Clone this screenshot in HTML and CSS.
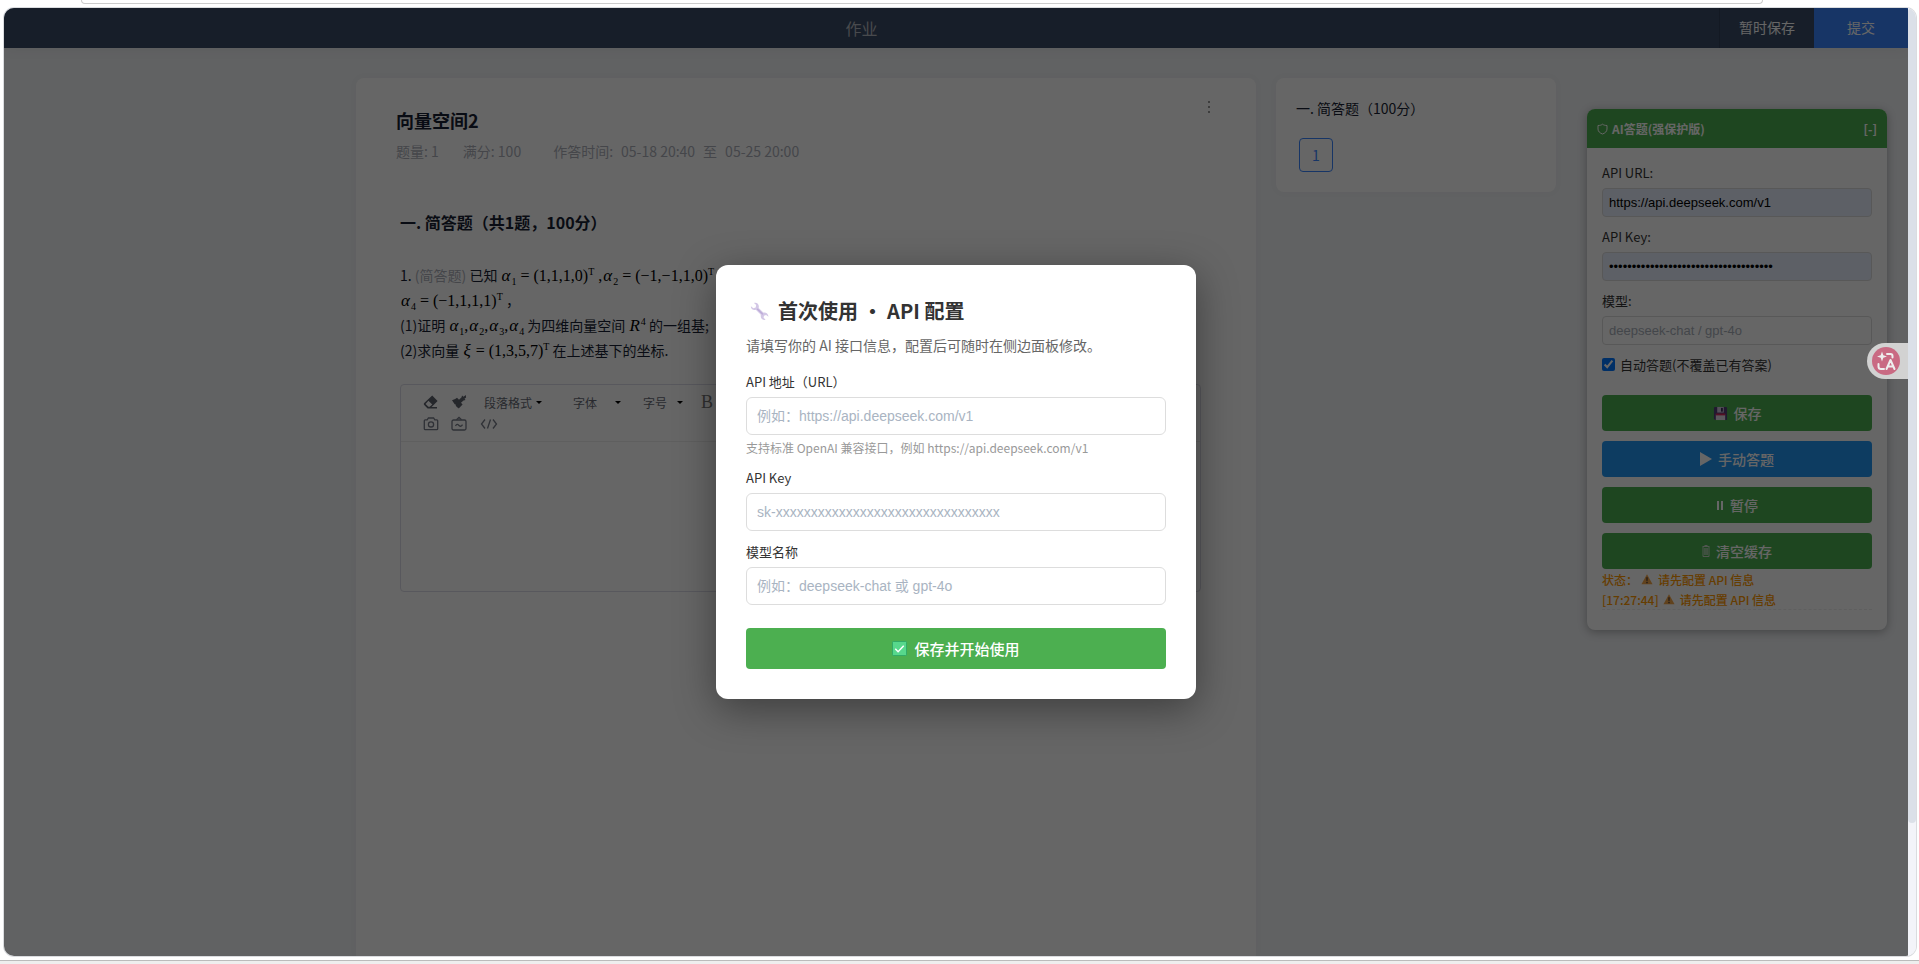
FILE: index.html
```
<!DOCTYPE html>
<html lang="zh-CN">
<head>
    <meta charset="UTF-8">
    <meta name="viewport" content="width=device-width, initial-scale=1.0">
    <title>作业</title>
    <link rel="stylesheet" href="styles.css">
</head>
<body>
    <div class="address-edge"></div>

    <div class="window">
        <div class="view">
            <header class="top-bar">
                <h1 class="top-title">作业</h1>
                <button class="top-btn" type="button">暂时保存</button>
                <button class="top-btn top-submit" type="button">提交</button>
            </header>

            <div class="page">
                <main class="paper">
                    <div class="paper-head">
                        <h2 class="paper-title">向量空间2</h2>
                        <svg class="more-icon" viewBox="0 0 4 14"><circle cx="2" cy="2" r="1"/><circle cx="2" cy="7" r="1"/><circle cx="2" cy="12" r="1"/></svg>
                    </div>
                    <div class="paper-meta">
                        <span>题量: 1</span>
                        <span>满分: 100</span>
                        <span class="meta-time">作答时间:<time>05-18 20:40</time>至<time>05-25 20:00</time></span>
                    </div>

                    <section class="question">
                        <h3 class="question-group">一. 简答题（共1题，100分）</h3>
                        <div class="question-text">
                            <p>1. <span class="question-type">(简答题)</span> 已知 <span class="math"><i>α</i><sub>1</sub> = (1,1,1,0)<sup>T</sup> ,<i>α</i><sub>2</sub> = (−1,−1,1,0)<sup>T</sup> ,<i>α</i><sub>3</sub> = (1,−1,1,−1)<sup>T</sup> ,</span></p>
                            <p><span class="math"><i>α</i><sub>4</sub> = (−1,1,1,1)<sup>T</sup></span> ，</p>
                            <p>(1)证明 <span class="math"><i>α</i><sub>1</sub>,<i>α</i><sub>2</sub>,<i>α</i><sub>3</sub>,<i>α</i><sub>4</sub></span> 为四维向量空间 <span class="math"><i>R</i><sup>4</sup></span> 的一组基;</p>
                            <p>(2)求向量 <span class="math"><i>ξ</i> = (1,3,5,7)<sup>T</sup></span> 在上述基下的坐标.</p>
                        </div>

                        <div class="editor">
                            <div class="toolbar">
                                <div class="toolbar-row">
                                    <button class="tool" type="button" aria-label="清除格式">
                                        <svg viewBox="0 0 16 16"><path d="M9.2 1.6 14.6 7 8.6 13H14v1.4H4.6L1.2 11a1.4 1.4 0 0 1 0-2zM5.4 6.8 2.6 9.9 5.4 12.8h1.3l2.6-2.4z" fill-rule="evenodd"/></svg>
                                    </button>
                                    <button class="tool" type="button" aria-label="格式刷">
                                        <svg viewBox="0 0 16 16"><path d="m1 6.2 3.2-1.1L6 3.8l2 2 2.6-2.6.4-1.8 1.6 1.3L14.8 1l.3 2.6-1.6 1.1 1 1.4-2 .3L10 8.8l1.6 1.8-3.9 4L6.5 13l.2 1-1.9-2.3-.1-1.3-1-.1z"/></svg>
                                    </button>
                                    <label class="pick pick-format"><select aria-label="段落格式"><option>段落格式</option></select></label>
                                    <label class="pick pick-font"><select aria-label="字体"><option>字体</option></select></label>
                                    <label class="pick pick-size"><select aria-label="字号"><option>字号</option></select></label>
                                    <button class="tool tool-bold" type="button">B</button>
                                </div>
                                <div class="toolbar-row">
                                    <button class="tool tool-line" type="button" aria-label="图片">
                                        <svg viewBox="0 0 16 16"><path d="M2.2 3.8h2L5.4 2h5.2l1.2 1.8h2c.5 0 .9.4.9.9v8c0 .5-.4.9-.9.9H2.2c-.5 0-.9-.4-.9-.9v-8c0-.5.4-.9.9-.9z"/><circle cx="8" cy="8.4" r="2.6"/></svg>
                                    </button>
                                    <button class="tool tool-line" type="button" aria-label="涂鸦">
                                        <svg viewBox="0 0 16 16"><rect x="1" y="4" width="14" height="10" rx="1.5"/><path d="M5.5 3.8 8 1.5l2.5 2.3M4.500 10c1.200-2 2-2 3.500-.6s2.400 1 3.500-.8"/></svg>
                                    </button>
                                    <button class="tool tool-line tool-code" type="button" aria-label="源代码">
                                        <svg viewBox="0 0 18 16"><path d="M5 3.500 1.500 8 5 12.500M13 3.500 16.500 8 13 12.500M10.500 3.500l-3 9"/></svg>
                                    </button>
                                </div>
                            </div>
                            <textarea class="editor-area" aria-label="作答"></textarea>
                        </div>
                    </section>
                </main>

                <aside class="sheet">
                    <h3 class="sheet-title">一. 简答题（100分）</h3>
                    <a class="sheet-item" href="#">1</a>
                </aside>
            </div>

            <div class="panel">
                <div class="panel-header">
                    <svg class="shield-icon" viewBox="0 0 11 12"><path d="M1 2.500C3 2.500 4.500 2 5.500 1.200 6.500 2 8 2.500 10 2.500V6c0 2.500-2 4.200-4.500 5C3 10.200 1 8.500 1 6z"/></svg>
                    <span class="panel-title">AI答题(强保护版)</span>
                    <span>[-]</span>
                </div>
                <div class="panel-body">
                    <label class="panel-label" for="panel-url">API URL:</label>
                    <input class="panel-input filled" id="panel-url" type="text" value="https://api.deepseek.com/v1">
                    <label class="panel-label" for="panel-key">API Key:</label>
                    <input class="panel-input filled" id="panel-key" type="password" value="sk-000000000000000000000000000000000">
                    <label class="panel-label" for="panel-model">模型:</label>
                    <input class="panel-input" id="panel-model" type="text" placeholder="deepseek-chat / gpt-4o">
                    <label class="panel-check"><input type="checkbox" checked>自动答题(不覆盖已有答案)</label>
                    <div class="panel-actions">
                        <button class="panel-btn" type="button">
                            <svg class="emoji" viewBox="0 0 16 16"><path d="M1 2a1 1 0 0 1 1-1h12a1 1 0 0 1 1 1v13H2.500L1 13.500z" fill="#533f78"/><path d="M4.500 1h7v6h-7z" fill="#cfc6dd"/><path d="M8.500 2h2v4h-2z" fill="#3b2e58"/><path d="M3 9h10v6H3z" fill="#e3dce8"/><path d="M3 8h10v2H3z" fill="#d4285a"/></svg>
                            保存
                        </button>
                        <button class="panel-btn panel-btn-blue" type="button">
                            <svg class="glyph" viewBox="0 0 12 14"><path d="M0 0 12 7 0 14z"/></svg>
                            手动答题
                        </button>
                        <button class="panel-btn" type="button">
                            <svg class="glyph glyph-pause" viewBox="0 0 8 14"><path d="M1 3h2v9H1zM5 3h2v9H5z"/></svg>
                            暂停
                        </button>
                        <button class="panel-btn" type="button">
                            <svg class="glyph glyph-bin" viewBox="0 0 8 14"><path d="M.5 2.500h7M1 3v9.500h6V3M2.800 4v7M4 4v7M5.200 4v7M2.500 1.500h3"/></svg>
                            清空缓存
                        </button>
                    </div>
                    <div class="status">状态：<svg class="warn" viewBox="0 0 14 14"><path d="M7 1.500 13.500 13H.5z" fill="#f2a64a"/><path d="M6.300 5h1.400l-.2 4.500h-1zM6.300 10.500h1.400v1.500H6.300z" fill="#332b33"/></svg>请先配置 API 信息</div>
                    <div class="status log">[17:27:44]<svg class="warn" viewBox="0 0 14 14"><path d="M7 1.500 13.500 13H.5z" fill="#f2a64a"/><path d="M6.300 5h1.400l-.2 4.500h-1zM6.300 10.500h1.400v1.500H6.300z" fill="#332b33"/></svg>请先配置 API 信息</div>
                </div>
            </div>

            <div class="overlay">
                <form class="modal">
                    <h2 class="modal-title">
                        <svg class="wrench" viewBox="0 0 20 20"><path d="M1 4.500 3.500 6.500 6 5.800 6.500 3.200 4.200 1C7 .2 9.500 2 9.300 5.200L9.100 6.200l5.200 5c2.500-.4 4.900 1.200 5.200 4.300l-2.600-1.800-2.200.7-.4 2.300 2.200 2.100c-2.900.7-5.600-1.300-5.200-4.600l.1-.8-5.300-5.200C3.300 9 .6 7.500 1 4.500z" fill="#d3c7e6"/><path d="m7.600 7.200 6 5.900" stroke="#b9a7d6" stroke-width="1.200"/></svg>
                        首次使用 ・ API 配置
                    </h2>
                    <p class="modal-desc">请填写你的 AI 接口信息，配置后可随时在侧边面板修改。</p>
                    <label class="field-label" for="api-url">API 地址（URL）</label>
                    <input class="field-input" id="api-url" type="text" placeholder="例如：https://api.deepseek.com/v1">
                    <p class="field-hint">支持标准 OpenAI 兼容接口，例如 https://api.deepseek.com/v1</p>
                    <label class="field-label" for="api-key">API Key</label>
                    <input class="field-input" id="api-key" type="text" placeholder="sk-xxxxxxxxxxxxxxxxxxxxxxxxxxxxxxxx">
                    <label class="field-label" for="api-model">模型名称</label>
                    <input class="field-input" id="api-model" type="text" placeholder="例如：deepseek-chat 或 gpt-4o">
                    <button class="modal-btn" type="button">
                        <svg class="emoji" viewBox="0 0 16 16"><rect x=".5" y=".5" width="15" height="15" rx="1" fill="#57d88c" stroke="#2fa866"/><path d="m3.500 8.200 3 3.300 6-6.500" fill="none" stroke="#fff" stroke-width="1.500"/></svg>
                        保存并开始使用
                    </button>
                </form>
            </div>

            <button class="translate" type="button" aria-label="翻译">
                <svg viewBox="0 0 28 28"><circle cx="14" cy="14" r="14" fill="#c96a83"/><g fill="none" stroke="#eee" stroke-width="2" stroke-linecap="round" stroke-linejoin="round"><path d="M15 7h3.500q2 0 2 2v1.500M6.500 17v2.500q0 2.500 2.500 2.500h3"/><path d="m14.500 22 4-9 4 9M16 19.500h5"/></g><path d="m10 4.500 1.300 3.700L15 9.500l-3.700 1.300L10 14.500l-1.300-3.700L5 9.500l3.700-1.300z" fill="#eee"/></svg>
            </button>
        </div>
        <div class="scrollbar"><div class="scroll-thumb"></div></div>
    </div>

    <div class="bottom-edge"></div>
</body>
</html>
```
FILE: styles.css
```
* {
    margin: 0;
    padding: 0;
    box-sizing: border-box;
}

body {
    display: flex;
    flex-direction: column;
    height: 100vh;
    overflow: hidden;
    background: #fff;
    font-family: "Noto Sans CJK SC", sans-serif;
    font-size: 14px;
    color: #181e33;
}

button,
input,
select,
textarea {
    font: inherit;
    border: none;
    outline: none;
}

/* window frame */
.address-edge {
    height: 4px;
    margin: 0 156px 0 81px;
    border: 1px solid #ccc;
    border-top: none;
    border-radius: 0 0 8px 8px;
}

.bottom-edge {
    height: 4px;
    background: #eee;
    border-top: 1px solid #bbb;
}

.window {
    flex: 1;
    min-height: 0;
    display: flex;
    margin: 4px 3px 4px 4px;
    border-radius: 10px;
    overflow: hidden;
    box-shadow: 0 0 0 1px #dadcdf;
}

.view {
    position: relative;
    flex: 1;
    display: flex;
    flex-direction: column;
    overflow: hidden;
    background: #f2f4f7;
}

.scrollbar {
    width: 8px;
    background: #f3f4f9;
}

.scroll-thumb {
    height: 86%;
    background: #dbe0e8;
    border-radius: 4px;
}

/* top bar */
.top-bar {
    display: flex;
    flex-shrink: 0;
    height: 40px;
    background: #3a4b66;
    box-shadow: 0 2px 12px rgba(0, 0, 0, 0.05);
}

.top-title {
    flex: 1;
    text-align: center;
    font-size: 16px;
    font-weight: 400;
    line-height: 40px;
    color: #b5b9c0;
}

.top-btn {
    width: 95px;
    padding-bottom: 2px;
    background: transparent;
    border-left: 1px solid #303f57;
    color: #fff;
}

.top-submit {
    width: 94px;
    background: #3a86ff;
    border-left: none;
}

/* page columns */
.page {
    flex: 1;
    min-height: 0;
    display: flex;
    justify-content: center;
    gap: 20px;
    padding-top: 30px;
}

.paper {
    width: 900px;
    padding: 29px 40px;
    background: #fff;
    border-radius: 8px 8px 0 0;
    box-shadow: 0 0 10px rgba(0, 0, 0, 0.03);
}

.paper-head {
    display: flex;
    justify-content: space-between;
}

.paper-title {
    font-size: 18px;
    line-height: 26px;
}

.more-icon {
    width: 4px;
    height: 14px;
    margin-right: 5px;
    margin-top: -7px;
    fill: #777;
}

.paper-meta {
    display: flex;
    gap: 24px;
    margin-top: 8px;
    line-height: 20px;
    color: #acb0ba;
}

.meta-time {
    display: flex;
    gap: 8px;
    margin-left: 8px;
}

.question {
    margin: 49px 15px 0 4px;
}

.question-group {
    font-size: 16px;
    line-height: 24px;
}

.question-text {
    margin-top: 29px;
    line-height: 25px;
    white-space: nowrap;
}

.question-text p {
    height: 25px;
}

.question-type {
    color: #acb0ba;
}

.math {
    font-family: "Liberation Serif", serif;
    font-size: 16px;
    color: #000;
}

.math i {
    margin: 0 1px;
    font-size: 17px;
}

.math sub,
.math sup {
    font-size: 10px;
    line-height: 0;
}

.editor {
    margin-top: 21px;
    border: 1px solid #dddde8;
    border-radius: 4px;
}

.toolbar {
    padding: 6px 16px;
    border-bottom: 1px solid #eee;
}

.toolbar-row {
    display: flex;
    align-items: center;
    height: 22px;
}

.tool {
    width: 28px;
    height: 22px;
    background: transparent;
    text-align: center;
}

.tool svg {
    display: block;
    width: 16px;
    height: 16px;
    margin: 0 auto;
    fill: #5d616c;
}

.tool-line svg {
    fill: none;
    stroke: #767b88;
    stroke-width: 1.3;
}

.tool-code svg {
    width: 18px;
}

.tool-code {
    margin-left: 2px;
}

.tool-bold {
    font-family: "Liberation Serif", serif;
    font-size: 18px;
    color: #777;
}

.pick {
    display: flex;
    align-items: center;
    margin-left: 11px;
    font-size: 12px;
}

.pick select {
    appearance: none;
    background: transparent;
    color: #666a75;
}

.pick::after {
    content: "";
    border: 3px solid transparent;
    border-top-color: #000;
    border-bottom: none;
}

.pick-format select {
    width: 52px;
}

.pick-font {
    margin-left: 31px;
}

.pick-font select {
    width: 42px;
}

.pick-size {
    margin-left: 22px;
    margin-right: 10px;
}

.pick-size select {
    width: 34px;
}

.editor-area {
    display: block;
    width: 100%;
    height: 149px;
    background: transparent;
    resize: none;
}

.sheet {
    align-self: flex-start;
    width: 280px;
    padding: 20px;
    background: #fff;
    border-radius: 8px;
    box-shadow: 0 0 10px rgba(0, 0, 0, 0.03);
}

.sheet-title {
    font-size: 14px;
    font-weight: 400;
    line-height: 20px;
}

.sheet-item {
    display: block;
    width: 34px;
    height: 34px;
    margin: 20px 3px 0;
    border: 1px solid #3a86ff;
    border-radius: 4px;
    text-align: center;
    line-height: 32px;
    color: #3a86ff;
    text-decoration: none;
}

/* floating answer panel */
.panel {
    position: absolute;
    top: 101px;
    right: 21px;
    width: 300px;
    background: #fff;
    border-radius: 8px;
    box-shadow: 0 2px 10px rgba(0, 0, 0, 0.3);
    font-size: 13px;
    color: #333;
    overflow: hidden;
}

.panel-header {
    display: flex;
    align-items: center;
    height: 39px;
    padding: 0 10px;
    background: #4caf50;
    color: #fff;
    font-size: 12px;
    font-weight: 700;
}

.shield-icon {
    width: 11px;
    height: 12px;
    margin-right: 4px;
    fill: none;
    stroke: #fff;
}

.panel-title {
    flex: 1;
}

.panel-body {
    padding: 15px 15px 20px;
}

.panel-label {
    display: block;
    margin-bottom: 5px;
    line-height: 20px;
}

.panel-input {
    display: block;
    width: 100%;
    height: 29px;
    margin-bottom: 10px;
    padding: 0 6px;
    border: 1px solid #ddd;
    border-radius: 4px;
    background: #fff;
    font-family: "Liberation Sans", "Noto Sans CJK SC", sans-serif;
    color: #000;
}

.panel-input::placeholder {
    color: #a9afba;
}

.panel-input.filled {
    background: #e8f0fe;
}

.panel-check {
    display: flex;
    align-items: center;
    gap: 5px;
    height: 19px;
}

.panel-check input {
    width: 13px;
    height: 13px;
}

.panel-actions {
    display: flex;
    flex-direction: column;
    gap: 10px;
    margin-top: 21px;
}

.panel-btn {
    display: flex;
    align-items: center;
    justify-content: center;
    gap: 6px;
    height: 36px;
    border-radius: 4px;
    background: #4caf50;
    color: #fff;
    font-size: 14px;
    font-weight: 500;
}

.panel-btn-blue {
    background: #2196f3;
}

.emoji {
    width: 15px;
    height: 15px;
}

.glyph {
    width: 12px;
    height: 14px;
    fill: #fff;
}

.glyph-pause,
.glyph-bin {
    width: 8px;
}

.glyph-bin {
    fill: none;
    stroke: #c8d8c8;
}

.status {
    display: flex;
    align-items: center;
    height: 20px;
    font-size: 12px;
    font-weight: 500;
    color: #ff9800;
}

.warn {
    width: 12px;
    height: 12px;
    margin: 0 5px 0 3px;
}

.log .warn {
    margin-left: 4px;
}

.log {
    height: 21px;
    border-bottom: 1px dashed #eee;
}

/* first-use dialog */
.overlay {
    position: absolute;
    inset: 0;
    display: flex;
    align-items: center;
    justify-content: center;
    background: rgba(0, 0, 0, 0.6);
}

.modal {
    width: 480px;
    padding: 29px 30px 30px;
    background: #fff;
    border-radius: 12px;
    box-shadow: 0 10px 40px rgba(0, 0, 0, 0.4);
    color: #333;
}

.modal-title {
    display: flex;
    align-items: center;
    gap: 9px;
    margin-bottom: 6px;
    font-size: 20px;
    line-height: 34px;
}

.wrench {
    width: 19px;
    height: 19px;
    margin-left: 4px;
}

.modal-desc {
    margin-bottom: 17px;
    line-height: 22px;
    color: #666;
}

.field-label {
    display: block;
    margin-top: 12px;
    margin-bottom: 6px;
    font-size: 13px;
    line-height: 18px;
}

.field-input {
    display: block;
    width: 100%;
    height: 38px;
    padding: 0 10px;
    border: 1px solid #ddd;
    border-radius: 6px;
    font-family: "Liberation Sans", "Noto Sans CJK SC", sans-serif;
}

.field-input::placeholder {
    color: #a9b4c2;
}

.field-hint {
    margin-top: 4px;
    font-size: 12px;
    line-height: 18px;
    color: #999;
}

.modal-btn {
    display: flex;
    align-items: center;
    justify-content: center;
    gap: 7px;
    width: 100%;
    height: 41px;
    margin-top: 23px;
    border-radius: 4px;
    background: #4caf50;
    color: #fff;
    font-size: 15px;
    font-weight: 500;
}

/* translate handle on the edge */
.translate {
    position: absolute;
    top: 335px;
    right: 0;
    width: 41px;
    height: 36px;
    padding: 4px 8px 4px 5px;
    background: #d2d2d2;
    border-radius: 18px 0 0 18px;
}

.translate svg {
    display: block;
    width: 28px;
    height: 28px;
}
```
